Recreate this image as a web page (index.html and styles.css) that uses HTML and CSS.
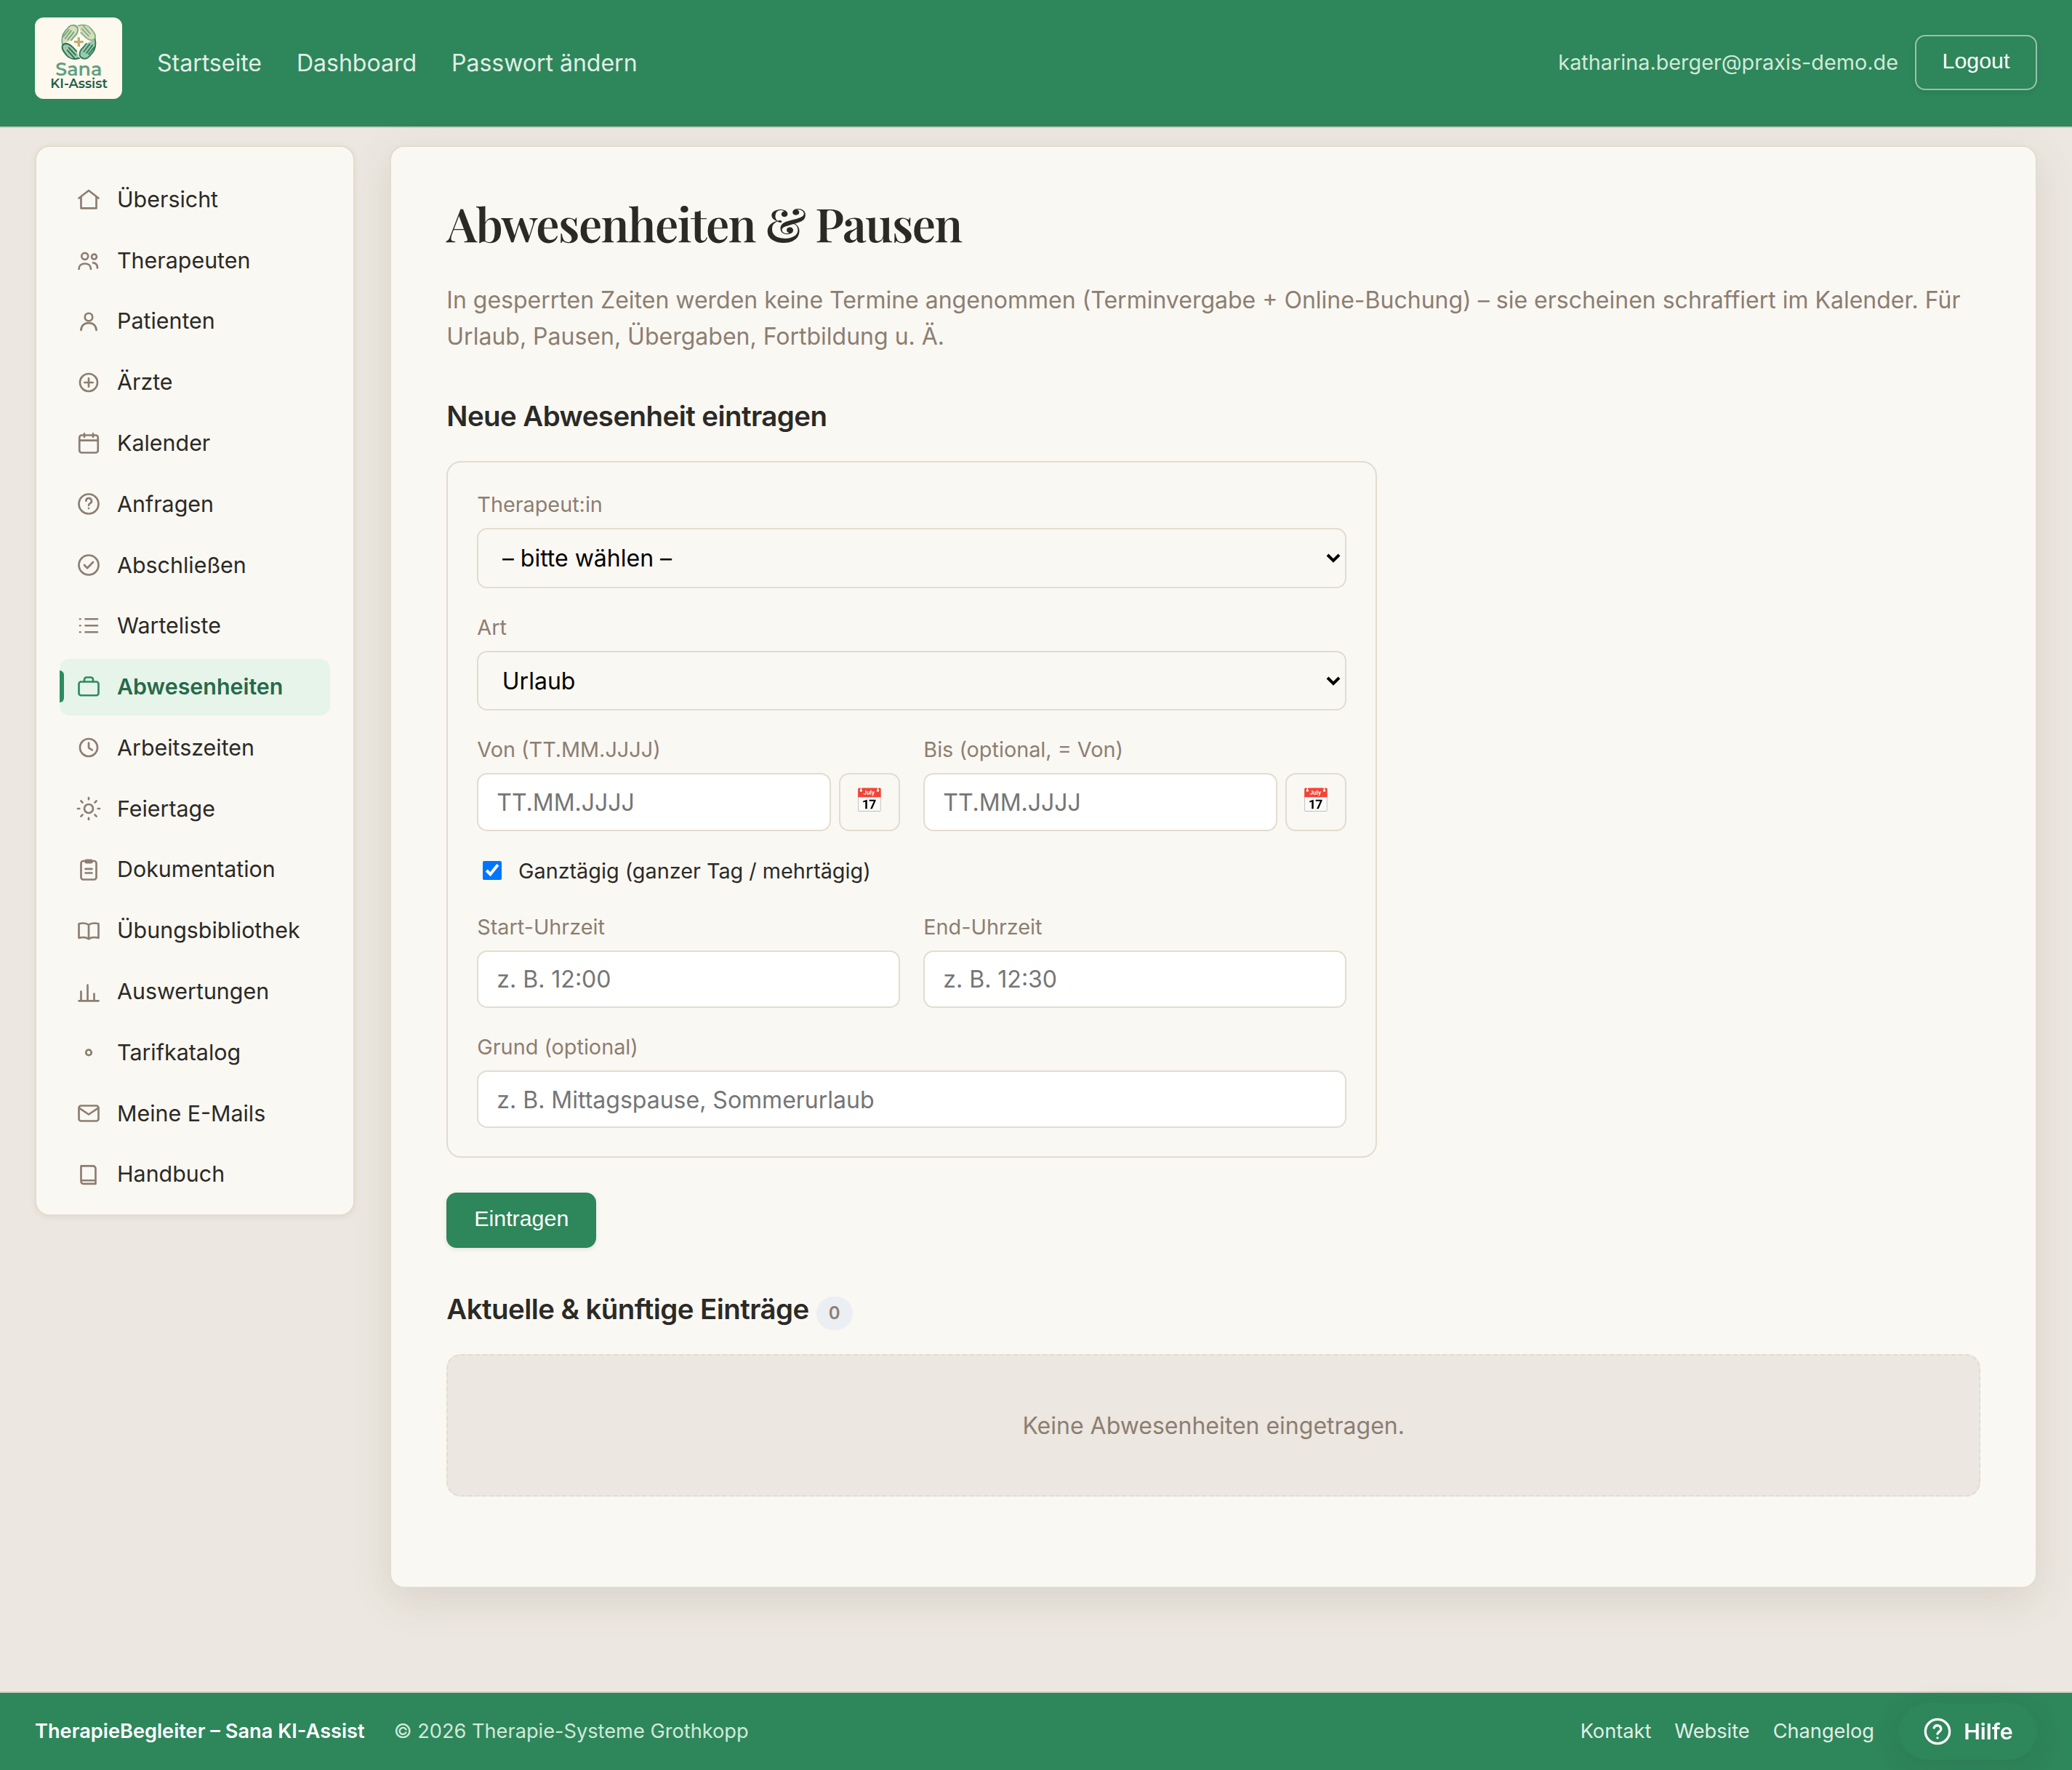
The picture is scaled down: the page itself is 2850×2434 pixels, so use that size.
FILE: index.html
```html
<!DOCTYPE html>
<html lang="de">
<head>
    <meta charset="UTF-8">
    <meta name="viewport" content="width=device-width, initial-scale=1.0">
    <title>Abwesenheiten &amp; Pausen</title>
    <link rel="stylesheet" href="styles.css">
</head>
<body>
    <header class="topbar">
        <a class="logo" href="#">
            <svg viewBox="24 27 360 336" width="120" height="112">
                <rect x="24" y="27" width="360" height="336" fill="#fdf9ee"/>
                <!-- four hands around the cross -->
                <g stroke-width="5.5" stroke-linecap="round" stroke-linejoin="round">
                    <path fill="#d8dcb8" stroke="#6fa883" d="M138 140C133 118 136 100 148 84L164 66C176 54 196 58 201 72C203 88 196 98 186 106L174 121M184 88L160 119M173 82L149 114M164 78L141 106"/>
                    <path fill="#d8dcb8" stroke="#7fb08b" d="M203 61C226 54 246 60 256 74L268 90C278 106 274 120 258 121C244 121 236 112 228 104L214 90M246 104L218 74M252 94L224 62"/>
                    <path fill="#9cc9a8" stroke="#2f7a5e" d="M272 116C277 138 274 156 262 172L246 190C234 202 214 198 209 184C207 168 214 158 224 150L236 135M226 168L250 137M237 174L261 142M246 178L269 150"/>
                    <path fill="#9cc9a8" stroke="#2c6b55" d="M207 195C184 202 164 196 154 182L142 166C132 150 136 136 152 135C166 135 174 144 182 152L196 166M164 152L192 182M158 162L186 194"/>
                </g>
                <path d="M205 109v38M186 128h38" stroke="#c0ad6c" stroke-width="10"/>
                <text class="logo-name" x="205" y="266" text-anchor="middle">Sana</text>
                <text class="logo-sub" x="206" y="318" text-anchor="middle">KI-Assist</text>
            </svg>
        </a>
        <nav class="topnav">
            <a href="#">Startseite</a>
            <a href="#">Dashboard</a>
            <a href="#">Passwort ändern</a>
        </nav>
        <div class="user">
            <span class="user-mail">katharina.berger@praxis-demo.de</span>
            <button class="btn btn-outline" type="button">Logout</button>
        </div>
    </header>

    <div class="layout">
        <aside class="sidebar">
            <a class="item" href="#"><svg viewBox="0 0 24 24"><path d="M3 11l9-7 9 7M5 10v10.3h14V10"/></svg>Übersicht</a>
            <a class="item" href="#"><svg viewBox="0 0 24 24"><circle cx="8.5" cy="8.2" r="3"/><circle cx="17" cy="8.7" r="2.3"/><path d="M3 20c0-3 2.3-5 5.5-5s5.5 2 5.5 5M16 14.2c2.6.2 4 2.2 4 4.8"/></svg>Therapeuten</a>
            <a class="item" href="#"><svg viewBox="0 0 24 24"><circle cx="12" cy="8" r="3.5"/><path d="M5 20c0-4 3-6.6 7-6.6s7 2.6 7 6.6"/></svg>Patienten</a>
            <a class="item" href="#"><svg viewBox="0 0 24 24"><circle cx="12" cy="12" r="8"/><path d="M12 8.2v7.6M8.2 12h7.6"/></svg>Ärzte</a>
            <a class="item" href="#"><svg viewBox="0 0 24 24"><rect x="3.5" y="5" width="17" height="16" rx="2"/><path d="M3.5 9.7h17M8 3.6v3M16 3.6v3"/></svg>Kalender</a>
            <a class="item" href="#"><svg viewBox="0 0 24 24"><circle cx="12" cy="12" r="9"/><path d="M9.6 9.2a2.5 2.5 0 1 1 3.7 2.2c-.9.5-1.3 1-1.3 1.9M12 16v.01"/></svg>Anfragen</a>
            <a class="item" href="#"><svg viewBox="0 0 24 24"><circle cx="12" cy="12" r="9"/><path d="M8 12l2.7 2.8L16 9.3"/></svg>Abschließen</a>
            <a class="item" href="#"><svg viewBox="0 0 24 24"><path d="M9 5.5h11M9 11.5h11M9 17.5h11M4 5.5h.3M4 11.5h.3M4 17.5h.3"/></svg>Warteliste</a>
            <a class="item active" href="#"><svg viewBox="0 0 24 24"><rect x="3" y="7" width="18" height="12.5" rx="2"/><path d="M8 7V5a2 2 0 0 1 2-2h4a2 2 0 0 1 2 2v2"/></svg>Abwesenheiten</a>
            <a class="item" href="#"><svg viewBox="0 0 24 24"><circle cx="12" cy="12" r="8"/><path d="M12 7.7v4.5l3.2 2"/></svg>Arbeitszeiten</a>
            <a class="item" href="#"><svg viewBox="0 0 24 24"><circle cx="12" cy="12" r="4"/><path d="M12 2v1.5M12 20.5V22M2 12h1.5M20.5 12H22M4.9 4.9l1.4 1.4M17.7 17.7l1.4 1.4M4.9 19.1l1.4-1.4M17.7 6.3l1.4-1.4"/></svg>Feiertage</a>
            <a class="item" href="#"><svg viewBox="0 0 24 24"><rect x="5" y="4" width="14" height="17" rx="2"/><rect x="9" y="3.2" width="6" height="2.2" rx="1"/><path d="M9 11.3h6M9 15h6"/></svg>Dokumentation</a>
            <a class="item" href="#"><svg viewBox="0 0 24 24"><path d="M12 6.5C10 5 6 4.8 3 5.5v13c3-.8 7-.5 9 1 2-1.5 6-1.8 9-1v-13c-3-.7-7-.5-9 1zM12 6.5v13"/></svg>Übungsbibliothek</a>
            <a class="item" href="#"><svg viewBox="0 0 24 24"><path d="M3 20.2h18M5 20v-8.5M11 20V5.8M17 20v-6.3"/></svg>Auswertungen</a>
            <a class="item" href="#"><svg viewBox="0 0 24 24"><circle cx="12" cy="12.3" r="2.5"/></svg>Tarifkatalog</a>
            <a class="item" href="#"><svg viewBox="0 0 24 24"><rect x="3" y="5" width="18" height="14" rx="2"/><path d="M3.5 7.3l8.5 5.7 8.5-5.7"/></svg>Meine E-Mails</a>
            <a class="item" href="#"><svg viewBox="0 0 24 24"><path d="M5 4.3h11a2.3 2.3 0 0 1 2.3 2.3v14H7.2A2.2 2.2 0 0 1 5 18.4zM5.5 17.5h12.5"/></svg>Handbuch</a>
        </aside>

        <main class="card">
            <h1>Abwesenheiten &amp; Pausen</h1>
            <p class="intro">In gesperrten Zeiten werden keine Termine angenommen (Terminvergabe + Online-Buchung) – sie erscheinen schraffiert im Kalender. Für Urlaub, Pausen, Übergaben, Fortbildung u. Ä.</p>

            <h2>Neue Abwesenheit eintragen</h2>
            <form>
                <div class="form-box">
                    <div class="field">
                        <label for="therapeut">Therapeut:in</label>
                        <div class="select-wrap">
                            <select id="therapeut"><option>– bitte wählen –</option></select>
                            <svg class="chevron" viewBox="0 0 20 14"><path d="M2 3l8 8 8-8"/></svg>
                        </div>
                    </div>
                    <div class="field">
                        <label for="art">Art</label>
                        <div class="select-wrap">
                            <select id="art"><option>Urlaub</option></select>
                            <svg class="chevron" viewBox="0 0 20 14"><path d="M2 3l8 8 8-8"/></svg>
                        </div>
                    </div>
                    <div class="row">
                        <div class="field">
                            <label for="von">Von (TT.MM.JJJJ)</label>
                            <div class="date">
                                <input type="text" id="von" placeholder="TT.MM.JJJJ">
                                <button class="date-btn" type="button">📅</button>
                            </div>
                        </div>
                        <div class="field">
                            <label for="bis">Bis (optional, = Von)</label>
                            <div class="date">
                                <input type="text" id="bis" placeholder="TT.MM.JJJJ">
                                <button class="date-btn" type="button">📅</button>
                            </div>
                        </div>
                    </div>
                    <label class="check"><input type="checkbox" checked>Ganztägig (ganzer Tag / mehrtägig)</label>
                    <div class="row">
                        <div class="field">
                            <label for="start">Start-Uhrzeit</label>
                            <input type="text" id="start" placeholder="z. B. 12:00">
                        </div>
                        <div class="field">
                            <label for="ende">End-Uhrzeit</label>
                            <input type="text" id="ende" placeholder="z. B. 12:30">
                        </div>
                    </div>
                    <div class="field">
                        <label for="grund">Grund (optional)</label>
                        <input type="text" id="grund" placeholder="z. B. Mittagspause, Sommerurlaub">
                    </div>
                </div>
                <button class="btn btn-primary" type="submit">Eintragen</button>
            </form>

            <h2>Aktuelle &amp; künftige Einträge <span class="badge">0</span></h2>
            <div class="empty">Keine Abwesenheiten eingetragen.</div>
        </main>
    </div>

    <footer class="footer">
        <strong>TherapieBegleiter – Sana KI-Assist</strong>
        <span class="copy">© 2026 Therapie-Systeme Grothkopp</span>
        <nav class="footer-links">
            <a href="#">Kontakt</a>
            <a href="#">Website</a>
            <a href="#">Changelog</a>
        </nav>
    </footer>

    <button class="help" type="button">
        <svg viewBox="0 0 24 24"><circle cx="12" cy="12" r="10"/><path d="M9.1 9a3 3 0 0 1 5.8 1c0 2-2.9 2.6-2.9 4M12 17.3v.01"/></svg>
        Hilfe
    </button>
</body>
</html>
```
FILE: styles.css
```css
:root {
    --green: #2e865b;
    --bg: #ece7e0;
    --card: #faf8f3;
    --line: #e3dccf;
    --text: #2b2a26;
    --muted: #8c7e72;
}

* {
    box-sizing: border-box;
}

body {
    margin: 0;
    min-height: 100vh;
    display: flex;
    flex-direction: column;
    background: var(--bg);
    color: var(--text);
    font-family: Inter, "Liberation Sans", sans-serif;
    font-size: 32px;
    line-height: 1.55;
}

a {
    color: inherit;
    text-decoration: none;
}

/* Header */
.topbar {
    display: flex;
    align-items: center;
    height: 176px;
    padding: 24px 48px 26px;
    background: var(--green);
    border-bottom: 2px solid #d2c9c3;
}

.logo {
    width: 120px;
    height: 112px;
    margin: 0 48px 12px 0;
    border-radius: 12px;
    overflow: hidden;
}

.logo svg {
    display: block;
}

.logo-name {
    font-family: Montserrat, Inter, sans-serif;
    font-size: 76px;
    font-weight: 600;
    fill: #619f7e;
}

.logo-sub {
    font-family: Montserrat, Inter, sans-serif;
    font-size: 53.5px;
    font-weight: 600;
    fill: #235f4b;
}

.topnav {
    display: flex;
    gap: 48px;
    padding-top: 2px;
    color: #e0efe6;
}

.user {
    display: flex;
    align-items: center;
    gap: 23px;
    margin-left: auto;
}

.user-mail {
    font-size: 28.8px;
    color: #d0ead9;
}

.btn {
    height: 76px;
    padding: 0 0 5px;
    border-radius: 14px;
    font-family: "Liberation Sans", Arial, sans-serif;
    font-size: 30.4px;
    color: #fff;
    background: var(--green);
    box-shadow: 0 2px 6px rgba(43, 42, 38, 0.1);
}

.btn-outline {
    width: 168px;
    border: 2px solid rgba(255, 255, 255, 0.5);
}

.btn-primary {
    display: block;
    width: 206px;
    border: 0;
}

/* Page columns */
.layout {
    display: grid;
    grid-template-columns: 440px 1fr;
    gap: 48px;
    align-items: start;
    padding: 24px 48px 0;
}

.sidebar {
    display: flex;
    flex-direction: column;
    gap: 6px;
    padding: 33.4px 32px 16px;
    background: var(--card);
    border: 2px solid var(--line);
    border-radius: 20px;
    box-shadow: 0 2px 8px rgba(90, 70, 30, 0.08);
}

.item {
    display: flex;
    align-items: center;
    gap: 21px;
    height: 77.8px;
    padding-left: 22px;
    border-radius: 14px;
    font-size: 30.4px;
}

.item svg {
    width: 36px;
    height: 36px;
    fill: none;
    stroke: var(--muted);
    stroke-width: 1.8;
    stroke-linecap: round;
    stroke-linejoin: round;
}

.item.active {
    position: relative;
    background: #e6f4e9;
    color: #27694b;
    font-weight: 600;
}

.item.active svg {
    stroke: #2e8b5e;
}

.item.active::before {
    content: "";
    position: absolute;
    left: 0;
    top: 16px;
    bottom: 18px;
    width: 6px;
    border-radius: 0 6px 6px 0;
    background: #2e8b5e;
}

.card {
    padding: 65px 76px 124px 76.3px;
    background: var(--card);
    border: 2px solid var(--line);
    border-radius: 20px;
    box-shadow: 0 16px 56px rgba(80, 70, 40, 0.12);
}

h1 {
    margin: 0 0 41px;
    font-family: "Playfair Display", "Liberation Serif", serif;
    font-size: 64px;
    font-weight: 600;
    line-height: 80px;
    letter-spacing: -0.023em;
}

.intro {
    margin: 0;
    color: var(--muted);
}

h2 {
    height: 46px;
    margin: 62px 0 39px;
    font-size: 38.4px;
    font-weight: 600;
    line-height: 46px;
    letter-spacing: -0.014em;
}

form + h2 {
    margin-top: 61px;
}

/* Form */
.form-box {
    display: flex;
    flex-direction: column;
    gap: 36px;
    width: 1280px;
    margin-bottom: 48px;
    padding: 40px 40px 39px;
    border: 2px solid var(--line);
    border-radius: 20px;
}

.row {
    display: grid;
    grid-template-columns: 1fr 1fr;
    gap: 32px;
}

.field {
    display: flex;
    flex-direction: column;
    gap: 15px;
}

.field label {
    font-size: 28.8px;
    line-height: 35px;
    color: var(--muted);
}

input[type="text"],
select {
    width: 100%;
    height: 79.4px;
    padding: 1px 25px 0;
    border: 2px solid var(--line);
    border-radius: 14px;
    background: #fff;
    font-family: inherit;
    font-size: 32px;
}

input::placeholder {
    color: #757575;
}

.select-wrap {
    position: relative;
    display: flex;
}

select {
    height: 82.6px;
    padding: 0 32.5px;
    appearance: none;
    background: var(--card);
    color: #000;
}

/* arrow over the select */
.chevron {
    position: absolute;
    right: 8px;
    top: 34px;
    width: 20px;
    height: 14px;
    fill: none;
    stroke: #000;
    stroke-width: 4;
}

.date {
    display: flex;
    gap: 11px;
}

.date input {
    flex: 1;
}

.date-btn {
    width: 84px;
    padding: 0 0 5px;
    border: 2px solid var(--line);
    border-radius: 14px;
    background: var(--card);
    font-family: "Liberation Sans", "Noto Color Emoji", sans-serif;
    font-size: 32px;
}

.check {
    display: flex;
    align-items: center;
    gap: 23px;
    height: 38.8px;
    margin-bottom: 3px;
    font-size: 28.8px;
}

.check input {
    width: 26px;
    height: 26px;
    margin: 0 0 3px 7.7px;
}

.badge {
    display: inline-block;
    height: 46px;
    margin-left: 1px;
    padding: 0 17px;
    border-radius: 23px;
    background: #ebeef2;
    color: var(--muted);
    font-size: 24px;
    line-height: 46px;
    letter-spacing: 0;
}

.empty {
    display: flex;
    align-items: center;
    justify-content: center;
    height: 196px;
    border: 2px dashed var(--line);
    border-radius: 20px;
    background: var(--bg);
    color: var(--muted);
}

/* Footer */
.footer {
    display: flex;
    align-items: center;
    height: 108px;
    margin-top: auto;
    padding: 0 272px 0 48px;
    background: var(--green);
    border-top: 2px solid #cdcac0;
    font-size: 27.2px;
    color: #e0efe6;
}

.footer strong {
    font-weight: 600;
    color: #fff;
}

.copy {
    margin-left: 40px;
    color: #d0ead9;
}

.footer-links {
    display: flex;
    gap: 32px;
    margin-left: auto;
}

/* Floating help button */
.help {
    position: fixed;
    right: 48px;
    bottom: 14px;
    display: flex;
    align-items: center;
    justify-content: center;
    gap: 16px;
    width: 190px;
    height: 78px;
    padding: 0;
    border: 0;
    border-radius: 39px;
    background: var(--green);
    box-shadow: 0 8px 36px rgba(40, 60, 40, 0.15);
    color: #fff;
    font-family: inherit;
    font-size: 30.4px;
    font-weight: 600;
}

.help svg {
    width: 40px;
    height: 40px;
    fill: none;
    stroke: #fff;
    stroke-width: 2;
    stroke-linecap: round;
    stroke-linejoin: round;
}
```
